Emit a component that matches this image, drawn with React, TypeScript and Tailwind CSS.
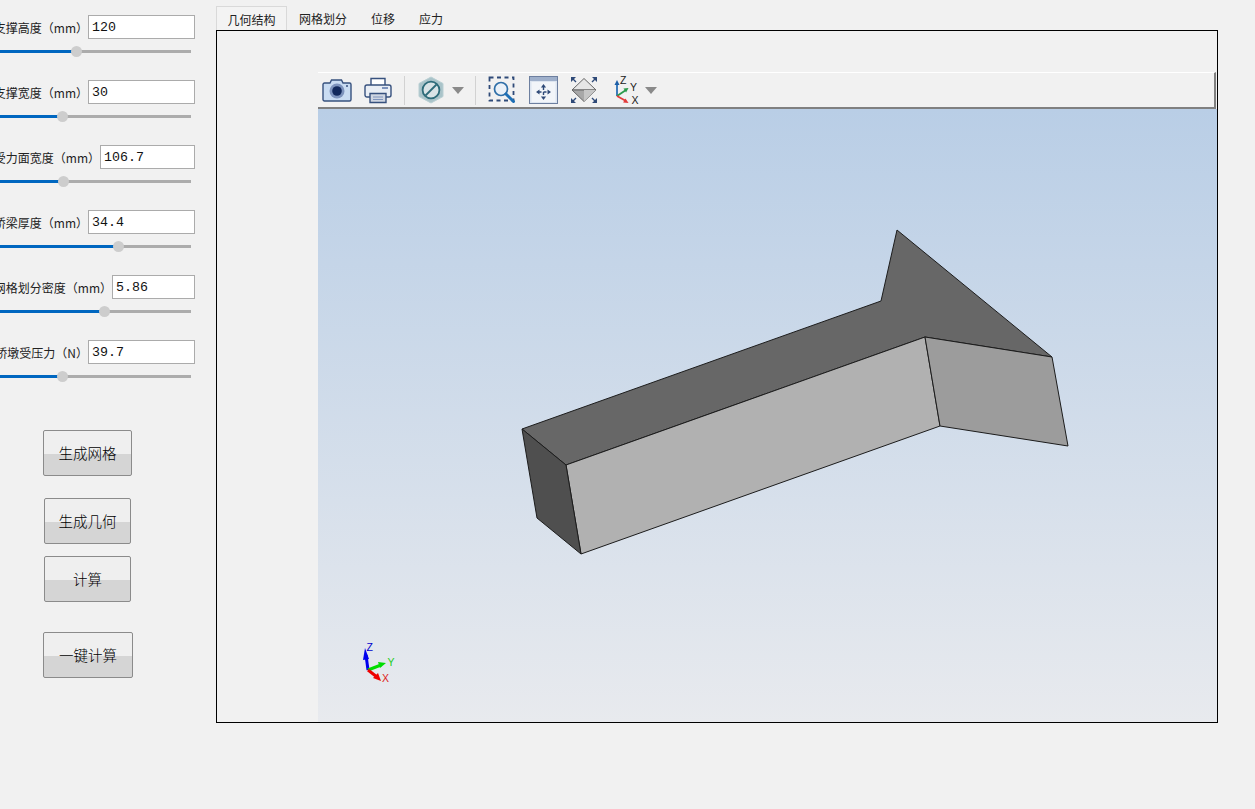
const SANS = "font-['Noto_Sans_CJK_SC','Noto_Sans',sans-serif]";

const Params = [
  { label: '支撑高度（mm）', value: '120', pos: 76, inputW: 'w-[107px]' },
  { label: '支撑宽度（mm）', value: '30', pos: 62, inputW: 'w-[107px]' },
  { label: '受力面宽度（mm）', value: '106.7', pos: 63, inputW: 'w-[95px]' },
  { label: '桥梁厚度（mm）', value: '34.4', pos: 118, inputW: 'w-[107px]' },
  { label: '网格划分密度（mm）', value: '5.86', pos: 104, inputW: 'w-[83px]' },
  { label: '桥墩受压力（N）', value: '39.7', pos: 62, inputW: 'w-[107px]' },
];

const Tabs = ['几何结构', '网格划分', '位移', '应力'];

function ParamRow({ label, value, pos, inputW }: { label: string; value: string; pos: number; inputW: string }) {
  return (
    <div className="mb-[19px] h-[46px] w-[195px]">
      <div className="flex h-[24px] items-center justify-end overflow-hidden">
        <span className="shrink-0 whitespace-nowrap pt-[2px] text-[12px] text-[#222]">{label}</span>
        <div
          className={`${inputW} flex h-[24px] shrink-0 items-center border border-[#ababab] bg-white pt-[2px] pl-[3px] font-['Liberation_Mono',monospace] text-[13.3px] text-[#111]`}
        >
          {value}
        </div>
      </div>
      {/* slider */}
      <div className="relative mt-[7px] h-[11px] w-[191px]">
        <div className="absolute top-[4px] h-[3px] w-full bg-[#acacac]" />
        <div className="absolute top-[4px] h-[3px] bg-[#0067c0]" style={{ width: pos }} />
        <div
          className="absolute top-0 h-[11px] w-[11px] rounded-full bg-[#cdcdcd]"
          style={{ left: pos - 5 }}
        />
      </div>
    </div>
  );
}

function GlossButton({ label, className }: { label: string; className: string }) {
  return (
    <button
      className={`${className} flex h-[46px] items-center justify-center rounded-[2px] border border-[#8b8b8b] bg-[linear-gradient(#efefef_0,#efefef_52%,#d5d5d5_52%,#d5d5d5_100%)] text-[14.5px] font-light text-black`}
    >
      {label}
    </button>
  );
}

function CameraIcon() {
  return (
    <svg width="30" height="24" viewBox="0 0 30 24">
      <path d="M1 6.500a1.500 1.500 0 0 1 1.500-1.500H8l1.500-3h10L21 5h6.500A1.500 1.500 0 0 1 29 6.500v15a1.500 1.500 0 0 1-1.500 1.500h-25A1.500 1.500 0 0 1 1 21.500z" fill="#c9dcf2" stroke="#37517e" strokeWidth="1.400" />
      <circle cx="15" cy="13" r="7.500" fill="#7e94bd" />
      <circle cx="15" cy="13" r="4.800" fill="#12295c" />
      <circle cx="25" cy="8" r="1" fill="#37517e" />
    </svg>
  );
}

function PrinterIcon() {
  return (
    <svg width="28" height="28" viewBox="0 0 28 28">
      <path d="M7 9V2.500h14V9" fill="#fff" stroke="#37517e" strokeWidth="1.400" />
      <rect x="1" y="9" width="26" height="12" rx="2" fill="#e9eef5" stroke="#37517e" strokeWidth="1.400" />
      <rect x="18" y="11" width="6" height="2" fill="#7e94bd" />
      <path d="M6 17.500h16V26.500H6z" fill="#cfd6e2" stroke="#37517e" strokeWidth="1.400" />
      <path d="M9 21h10M9 23.500h10" stroke="#7e94bd" />
    </svg>
  );
}

function BlockIcon() {
  return (
    <svg width="26" height="28" viewBox="0 0 26 28">
      <path d="M13 1 25 7.500v13L13 27 1 20.500v-13z" fill="#a9c3c9" stroke="#b9cfd3" />
      <circle cx="13" cy="14" r="8.400" fill="#d9e3e6" stroke="#2d6b79" strokeWidth="1.800" />
      <path d="M7.500 19.500 18.500 8.500" stroke="#2d6b79" strokeWidth="1.800" />
    </svg>
  );
}

function Caret() {
  return (
    <svg width="12" height="7" viewBox="0 0 12 7">
      <path d="M0 0h12L6 7z" fill="#8a8a8a" />
    </svg>
  );
}

function ZoomBoxIcon() {
  return (
    <svg width="28" height="28" viewBox="0 0 28 28">
      <path d="M1.500 1.500h24v23h-24z" fill="none" stroke="#2f4a78" strokeWidth="1.800" strokeDasharray="4 3.500" />
      <circle cx="13" cy="13" r="6.500" fill="#eaf1f8" stroke="#2f6fa8" strokeWidth="1.700" />
      <path d="M18 18l7.500 7.500" stroke="#1d6fb5" strokeWidth="3" strokeLinecap="round" />
    </svg>
  );
}

function PanIcon() {
  return (
    <svg width="29" height="28" viewBox="0 0 29 28">
      <rect x="0.500" y="0.500" width="28" height="27" fill="#dde5f0" stroke="#6d7f9f" />
      <rect x="1" y="1" width="27" height="4" fill="#9fb0cb" />
      <rect x="2.500" y="6" width="24" height="20" fill="#f2f5f9" />
      <path d="M14.500 11v10M9.500 16h10" stroke="#2f4a78" strokeWidth="1.400" strokeDasharray="3 2" />
      <path d="M14.500 8l-2.600 3.500h5.200zM14.500 24l-2.600-3.500h5.200zM7 16l3.500-2.600v5.200zM22 16l-3.500-2.600v5.200z" fill="#2f4a78" />
    </svg>
  );
}

function FitIcon() {
  return (
    <svg width="28" height="28" viewBox="0 0 28 28">
      <path d="M14 2.500 26 14H2z" fill="#e6e6e6" stroke="#666" />
      <path d="M2 14h24L14 25.500z" fill="#a8a8a8" stroke="#666" />
      <path d="M14 14h12L14 25.500z" fill="#c6c6c6" />
      <path d="M1 1h5L1 6zM27 1h-5l5 5zM1 27h5l-5-5zM27 27h-5l5-5z" fill="#2f4a78" />
      <path d="M3 3l3 3M25 3l-3 3M3 25l3-3M25 25l-3-3" stroke="#2f4a78" strokeWidth="1.400" />
    </svg>
  );
}

function TriadIcon() {
  return (
    <svg width="26" height="30" viewBox="0 0 26 30">
      <path d="M4 21V9" stroke="#2a6fb5" strokeWidth="1.800" />
      <path d="M4 5 1.500 10h5z" fill="#1d5fa8" />
      <path d="M4 21 13 15" stroke="#2b9a4b" strokeWidth="1.800" />
      <path d="M15.500 13l-5 .6 2.600 4z" fill="#2b9a4b" />
      <path d="M4 21 13 26" stroke="#e23b3b" strokeWidth="1.800" />
      <path d="M15.500 28l-3-4.400-2.400 4z" fill="#e23b3b" />
      <text x="7" y="8.500" fontSize="10.500" fill="#222" fontFamily="Liberation Sans">Z</text>
      <text x="17" y="15.500" fontSize="10.500" fill="#222" fontFamily="Liberation Sans">Y</text>
      <text x="18.500" y="28.500" fontSize="10.500" fill="#222" fontFamily="Liberation Sans">X</text>
    </svg>
  );
}

function Divider() {
  return <div className="h-[29px] w-px bg-[#d2d2d2]" />;
}

function Toolbar() {
  return (
    <div className="mr-px flex h-[37px] items-center border-t border-r-2 border-b-2 border-t-white border-r-[#808080] border-b-[#808080] bg-[#f1f1f1] pl-[4px]">
      <CameraIcon />
      <div className="ml-[12px]"><PrinterIcon /></div>
      <div className="ml-[12px]"><Divider /></div>
      <div className="ml-[13px]"><BlockIcon /></div>
      <div className="ml-[8px]"><Caret /></div>
      <div className="ml-[11px]"><Divider /></div>
      <div className="ml-[12px]"><ZoomBoxIcon /></div>
      <div className="ml-[13px]"><PanIcon /></div>
      <div className="ml-[12px]"><FitIcon /></div>
      <div className="ml-[15px]"><TriadIcon /></div>
      <div className="ml-[6px]"><Caret /></div>
    </div>
  );
}

// viewBox uses page coordinates so the model can be read straight off the screenshot
function Model() {
  return (
    <svg className="absolute inset-0 h-full w-full" viewBox="318 109 899 613">
      <g stroke="#1c1c1c" strokeWidth="1" strokeLinejoin="round">
        <path d="M522 429 881 301 897 230 1052 357 925 337 566 465z" fill="#676767" />
        <path d="M566 465 925 337 940 426 581 554z" fill="#b1b1b1" />
        <path d="M925 337 1052 357 1068 446 940 426z" fill="#9c9c9c" />
        <path d="M522 429 566 465 581 554 537 518z" fill="#4f4f4f" />
      </g>
      {/* axis triad */}
      <path d="M368 670 366 655" stroke="#0000ee" strokeWidth="3" />
      <path d="M365 648 363 660 369 659z" fill="#0000ee" />
      <path d="M368 670 381 665" stroke="#00dd00" strokeWidth="3" />
      <path d="M386 663 378 662 380 668z" fill="#00dd00" />
      <path d="M368 670 377 677" stroke="#ee0000" strokeWidth="3" />
      <path d="M381 681 378 673 373 678z" fill="#ee0000" />
      <text x="366.500" y="651" fontSize="10.500" fill="#0000cc" fontFamily="Liberation Sans">Z</text>
      <text x="387.500" y="666" fontSize="10.500" fill="#22cc22" fontFamily="Liberation Sans">Y</text>
      <text x="382" y="682" fontSize="10.500" fill="#dd2222" fontFamily="Liberation Sans">X</text>
    </svg>
  );
}

export default function App() {
  return (
    <div className={`${SANS} flex h-[809px] w-[1255px] overflow-hidden bg-[#f1f1f1]`}>
      {/* left params */}
      <div className="flex w-[216px] shrink-0 flex-col pt-[15px]">
        {Params.map((p) => (
          <ParamRow key={p.label} {...p} />
        ))}
        <GlossButton label="生成网格" className="mt-[25px] ml-[43px] w-[89px]" />
        <GlossButton label="生成几何" className="mt-[22px] ml-[44px] w-[87px]" />
        <GlossButton label="计算" className="mt-[12px] ml-[44px] w-[87px]" />
        <GlossButton label="一键计算" className="mt-[30px] ml-[43px] w-[90px]" />
      </div>

      {/* tabs + pane */}
      <div className="flex w-[1002px] shrink-0 flex-col pt-[6px]">
        <div className="flex h-[24px] text-[12px] text-[#222]">
          <div className="flex w-[71px] items-center justify-center border border-b-0 border-[#d9d9d9] bg-[#f3f3f3] pt-[2px]">
            {Tabs[0]}
          </div>
          <div className="flex w-[72px] items-center justify-center pt-[2px]">{Tabs[1]}</div>
          <div className="flex w-[48px] items-center justify-center pt-[2px]">{Tabs[2]}</div>
          <div className="flex w-[48px] items-center justify-center pt-[2px]">{Tabs[3]}</div>
        </div>
        <div className="flex h-[693px] flex-col border border-black pt-[41px] pl-[101px]">
          <Toolbar />
          <div className="relative flex-1 bg-[linear-gradient(#b9cee6,#e8eaee)]">
            <Model />
          </div>
        </div>
      </div>
    </div>
  );
}
